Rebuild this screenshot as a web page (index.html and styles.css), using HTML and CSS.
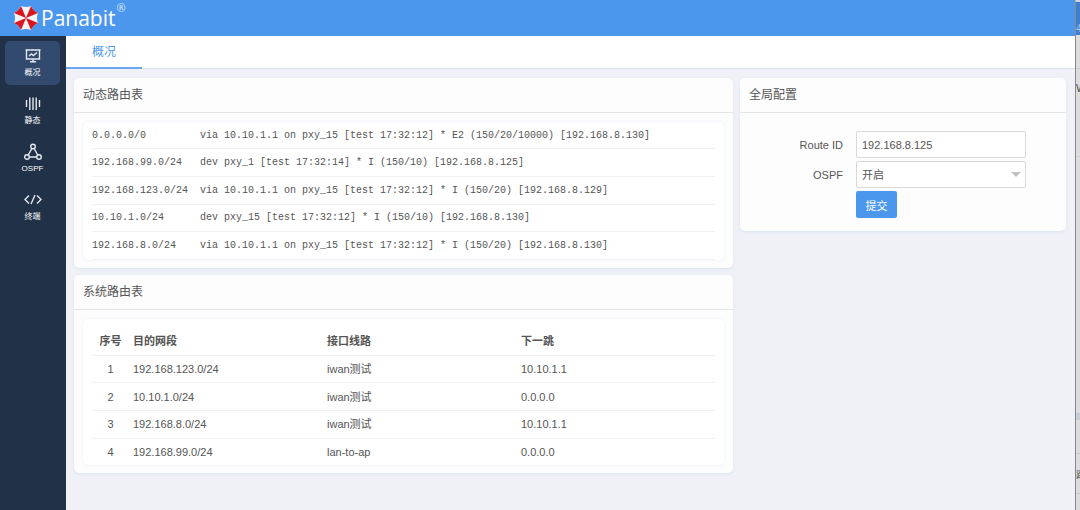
FILE: index.html
```html
<!DOCTYPE html>
<html lang="zh-CN">
<head>
    <meta charset="UTF-8">
    <meta name="viewport" content="width=device-width, initial-scale=1.0">
    <title>Panabit</title>
    <link rel="stylesheet" href="styles.css">
</head>
<body>

    <div class="window">
        <header class="topbar">
            <svg class="logo" viewBox="0 0 26 26">
                <path d="M8 1Q13 3 18 1Q20 6 25 8Q23 13 25 18Q20 20 18 25Q13 23 8 25Q6 20 1 18Q3 13 1 8Q6 6 8 1Z" fill="#f4f4f6"/>
                <g fill="#d9141c">
                    <path d="M13 13L8 1Q6 6 1 8Z"/>
                    <path d="M13 13L18 1Q20 6 25 8Z"/>
                    <path d="M13 13L25 18Q20 20 18 25Z"/>
                    <path d="M13 13L8 25Q6 20 1 18Z"/>
                </g>
            </svg>
            <span class="brand">Panabit</span><span class="reg">®</span>
        </header>

        <div class="body">
            <nav class="sidebar">
                <a href="#" class="item active">
                    <svg viewBox="0 0 18 18">
                        <path d="M2.500 3h13v9h-13zM1.500 3h15M9 12v2.500M6 14.800h6M5 9l2.500-2 1.800 1.500L13 5.500"/>
                    </svg>
                    <span>概况</span>
                </a>
                <a href="#" class="item">
                    <svg viewBox="0 0 18 18">
                        <path d="M2.500 5v7M5.800 2.500v12.500M9 2.500v12.500M12.200 2.500v12.500M15.500 5v7"/>
                    </svg>
                    <span>静态</span>
                </a>
                <a href="#" class="item">
                    <svg viewBox="0 0 18 18">
                        <circle cx="9" cy="3.500" r="2.300"/>
                        <circle cx="3" cy="14" r="2.300"/>
                        <circle cx="15" cy="14" r="2.300"/>
                        <path d="M7.900 5.500L4.200 12M10.100 5.500l3.700 6.500M5.300 14h7.400"/>
                    </svg>
                    <span>OSPF</span>
                </a>
                <a href="#" class="item">
                    <svg viewBox="0 0 18 18">
                        <path d="M5 4.500L1 8.500l4 4M13 4.500l4 4-4 4M11 4l-4 9"/>
                    </svg>
                    <span>终端</span>
                </a>
            </nav>

            <main class="main">
                <div class="tabs">
                    <a href="#" class="tab">概况</a>
                </div>

                <div class="content">
                    <div class="column">
                        <section class="card">
                            <h3>动态路由表</h3>
                            <div class="panel">
                                <table class="routes">
                                    <tbody>
                                        <tr><td class="net">0.0.0.0/0</td><td>via 10.10.1.1 on pxy_15 [test 17:32:12] * E2 (150/20/10000) [192.168.8.130]</td></tr>
                                        <tr><td>192.168.99.0/24</td><td>dev pxy_1 [test 17:32:14] * I (150/10) [192.168.8.125]</td></tr>
                                        <tr><td>192.168.123.0/24</td><td>via 10.10.1.1 on pxy_15 [test 17:32:12] * I (150/20) [192.168.8.129]</td></tr>
                                        <tr><td>10.10.1.0/24</td><td>dev pxy_15 [test 17:32:12] * I (150/10) [192.168.8.130]</td></tr>
                                        <tr><td>192.168.8.0/24</td><td>via 10.10.1.1 on pxy_15 [test 17:32:12] * I (150/20) [192.168.8.130]</td></tr>
                                    </tbody>
                                </table>
                            </div>
                        </section>

                        <section class="card">
                            <h3>系统路由表</h3>
                            <div class="panel spaced">
                                <table class="system">
                                    <thead>
                                        <tr><th class="num">序号</th><th>目的网段</th><th>接口线路</th><th>下一跳</th></tr>
                                    </thead>
                                    <tbody>
                                        <tr><td class="num">1</td><td>192.168.123.0/24</td><td>iwan测试</td><td>10.10.1.1</td></tr>
                                        <tr><td class="num">2</td><td>10.10.1.0/24</td><td>iwan测试</td><td>0.0.0.0</td></tr>
                                        <tr><td class="num">3</td><td>192.168.8.0/24</td><td>iwan测试</td><td>10.10.1.1</td></tr>
                                        <tr><td class="num">4</td><td>192.168.99.0/24</td><td>lan-to-ap</td><td>0.0.0.0</td></tr>
                                    </tbody>
                                </table>
                            </div>
                        </section>
                    </div>

                    <section class="card">
                        <h3>全局配置</h3>
                        <form class="config">
                            <label for="routeId">Route ID</label>
                            <input type="text" id="routeId" value="192.168.8.125">
                            <label for="ospf">OSPF</label>
                            <div class="select">
                                <select id="ospf">
                                    <option>开启</option>
                                    <option>关闭</option>
                                </select>
                            </div>
                            <button type="button">提交</button>
                        </form>
                    </section>
                </div>
            </main>
        </div>
    </div>

    <!-- edge of the window behind -->
    <div class="behind">
        <div class="behind-bar">4r</div>
        <div class="behind-tabs"></div>
        <div class="behind-title">W</div>
        <div class="behind-body"></div>
        <div class="behind-band"></div>
        <div class="behind-row"></div>
        <div class="behind-row text">路</div>
        <div class="behind-rest"></div>
    </div>

</body>
</html>
```
FILE: styles.css
```css
* { box-sizing: border-box; }
body { margin: 0; min-height: 100vh; display: flex; font-family: "Liberation Sans", "Noto Sans CJK SC", sans-serif; font-size: 11px; color: #555; }
a { text-decoration: none; }
.window { flex: 1; min-width: 0; display: flex; flex-direction: column; background: #eff1f6; }

.topbar { height: 36px; display: flex; align-items: center; padding-left: 13px; background: #4c97ee; color: #fff; }
.logo { width: 26px; height: 26px; margin-right: 2px; }
.brand { font: 21px/30px "Open Sans", sans-serif; }
.reg { align-self: flex-start; margin-left: 1px; font: 11px/16px "Open Sans", sans-serif; opacity: 0.8; }

.body { flex: 1; display: flex; }
.sidebar { width: 66px; padding: 5px 6px 5px 5px; display: flex; flex-direction: column; gap: 4px; background: #213147; }
.item { height: 44px; padding-top: 6px; display: flex; flex-direction: column; align-items: center; border-radius: 5px; color: #fff; font-size: 8px; line-height: 16px; }
.item svg { width: 18px; height: 18px; fill: none; stroke: #e4e9ef; stroke-width: 1.4; }
.item.active { background: #324a6d; }

.main { flex: 1; min-width: 0; }
.tabs { height: 33px; display: flex; background: #fff; border-bottom: 1px solid #d5e1f2; }
.tab { height: 33px; padding: 0 26px; font-size: 12px; line-height: 33px; color: #4c97ee; border-bottom: 2px solid #6ba7ee; }
.content { display: grid; grid-template-columns: 659fr 326fr; gap: 7px; align-items: start; padding: 9px 9px 9px 8px; }
.column { min-width: 0; display: grid; gap: 7px; }

.card { background: #fdfdfe; border-radius: 5px; box-shadow: 0 1px 3px #d9e3f2; }
.card h3 { margin: 0; height: 35px; padding-left: 9px; font-size: 12px; line-height: 34px; font-weight: normal; border-bottom: 1px solid #e4e5e8; }
.panel { margin: 0 9px; padding: 0 9px; background: #fff; border-radius: 5px; box-shadow: 0 0 3px #e9effa; }
.card .panel { margin-top: 9px; }
.card:has(.panel) { padding-bottom: 8px; }
.panel.spaced { padding-top: 8px; }

table { width: 100%; height: 138px; table-layout: fixed; border-collapse: collapse; }
th, td { padding: 0; text-align: left; line-height: 16px; white-space: nowrap; border-bottom: 1px solid #f0f1f3; }
th { height: 28px; }
.system tr:last-child td { border-bottom: none; }
.routes { font-family: "Liberation Mono", monospace; font-size: 10px; }
.routes td { padding-top: 1px; }
.routes .net { width: 108px; }
.system .num { width: 41px; padding-right: 4px; text-align: center; }

.config { display: grid; grid-template-columns: 103px 170px; column-gap: 13px; row-gap: 3px; align-items: center; padding: 18px 0 13px; }
.config label { text-align: right; }
.config input, .config select { display: block; width: 100%; height: 27px; padding: 0 5px; font: inherit; color: #555; background: #fff; border: 1px solid #d9d9d9; border-radius: 2px; appearance: none; }
.select { position: relative; }
.select::after { content: ""; position: absolute; right: 5px; top: 11px; border: 5px solid transparent; border-top-color: #c2c2c2; border-bottom: none; pointer-events: none; }
.config button { grid-column: 2; justify-self: start; width: 41px; height: 27px; padding: 0; font: inherit; color: #fff; background: #4c97ee; border: none; border-radius: 2px; cursor: pointer; }

.behind { width: 5px; overflow: hidden; display: flex; flex-direction: column; background: #dddddd; border-left: 1px solid #858991; border-top: 2px solid #cfd3d8; }
.behind-bar { height: 33px; line-height: 54px; background: #417fca; color: #a9c6e8; font-size: 10px; overflow: hidden; }
.behind-tabs { height: 34px; border-bottom: 1px solid #c8cacc; }
.behind-title { height: 88px; line-height: 38px; border-bottom: 1px solid #ced2d8; }
.behind-body { height: 256px; }
.behind-band { height: 7px; background: #c9ccd5; }
.behind-row { height: 34px; border-bottom: 1px solid #c6c6c6; }
.behind-row.text { height: 40px; line-height: 42px; font-size: 9px; }
.behind-rest { flex: 1; }
```
